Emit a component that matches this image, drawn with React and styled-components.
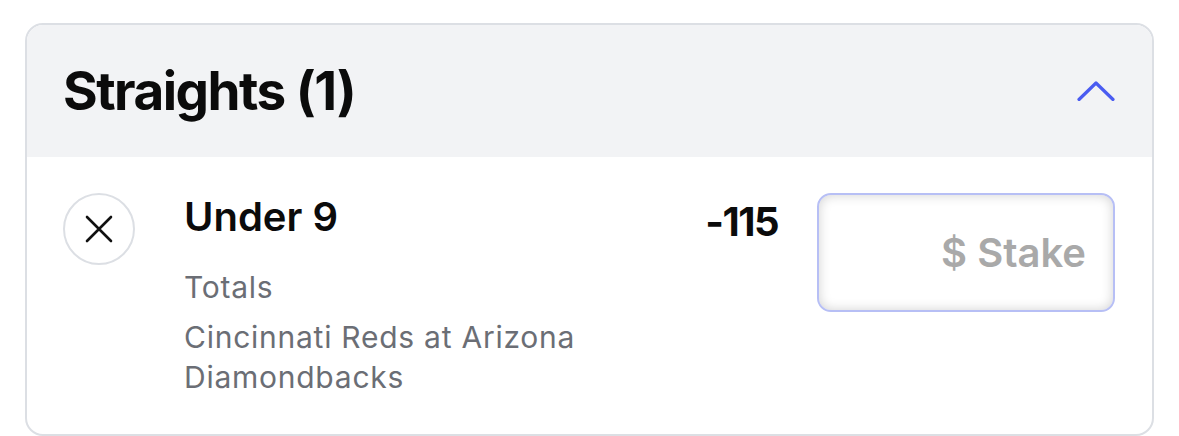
import React from 'react';
import styled, { createGlobalStyle } from 'styled-components';

const Global = createGlobalStyle`
  body {
    margin: 0;
    background: #ffffff;
    font-family: Inter, "Noto Sans", sans-serif;
  }
`;

const Page = styled.div`
  padding: 23px 25px 0 25px;
`;

const Card = styled.div`
  border: 2px solid #dcdfe4;
  border-radius: 18px;
  overflow: hidden;
  background: #ffffff;
`;

const Header = styled.div`
  display: flex;
  align-items: center;
  justify-content: space-between;
  height: 132px;
  padding: 0 37px 0 36px;
  background: #f2f3f5;
`;

const Title = styled.h2`
  margin: 0;
  font-size: 53px;
  font-weight: 700;
  letter-spacing: -1.5px;
  color: #0b0b0b;
`;

const Toggle = styled.button`
  display: flex;
  border: 0;
  padding: 0;
  background: none;
  cursor: pointer;
`;

const Row = styled.div`
  display: flex;
  align-items: flex-start;
  padding: 36px 37px 37px 36px;
`;

const Remove = styled.button`
  flex: none;
  display: flex;
  align-items: center;
  justify-content: center;
  width: 72px;
  height: 72px;
  margin-right: 49px;
  border: 2px solid #dcdfe4;
  border-radius: 50%;
  background: #ffffff;
  padding: 0;
`;

const Info = styled.div`
  flex: 1;
  display: flex;
  flex-direction: column;
`;

const Pick = styled.div`
  font-size: 40px;
  line-height: 48px;
  font-weight: 600;
  color: #0b0b0b;
`;

const Meta = styled.div`
  font-size: 30px;
  line-height: 40px;
  letter-spacing: 0.75px;
  color: #6b6e75;
  margin-top: ${p => p.gap}px;
  max-width: 410px;
`;

const Odds = styled.div`
  margin: 5px 39px 0 0;
  font-size: 40px;
  line-height: 48px;
  font-weight: 700;
  letter-spacing: -1.5px;
  color: #0b0b0b;
`;

const Stake = styled.input`
  flex: none;
  box-sizing: border-box;
  width: 298px;
  height: 119px;
  padding: 0 27px 0 20px;
  border: 2.5px solid #b7bff5;
  border-radius: 14px;
  background: #ffffff;
  box-shadow: inset 0 0 12px rgba(0, 0, 0, 0.18);
  font-family: inherit;
  font-size: 40px;
  font-weight: 600;
  text-align: right;
  outline: none;

  &::placeholder {
    color: #a9a9a9;
  }
`;

export default function App() {
  return (
    <Page>
      <Global />
      <Card>
        <Header>
          <Title>Straights (1)</Title>
          <Toggle aria-label="collapse">
            <svg width="38" height="20" viewBox="0 0 38 20" fill="none">
              <path d="M2 18.5 L19 2 L36 18.5" stroke="#4a5cf1" strokeWidth="3.2" strokeLinecap="round" strokeLinejoin="round" />
            </svg>
          </Toggle>
        </Header>
        <Row>
          <Remove aria-label="remove">
            <svg width="28" height="28" viewBox="0 0 28 28" fill="none">
              <path d="M2 2 L26 26 M26 2 L2 26" stroke="#111" strokeWidth="2.6" strokeLinecap="round" />
            </svg>
          </Remove>
          <Info>
            <Pick>Under 9</Pick>
            <Meta gap={26}>Totals</Meta>
            <Meta gap={10}>Cincinnati Reds at Arizona Diamondbacks</Meta>
          </Info>
          <Odds>-115</Odds>
          <Stake placeholder="$ Stake" />
        </Row>
      </Card>
    </Page>
  );
}
